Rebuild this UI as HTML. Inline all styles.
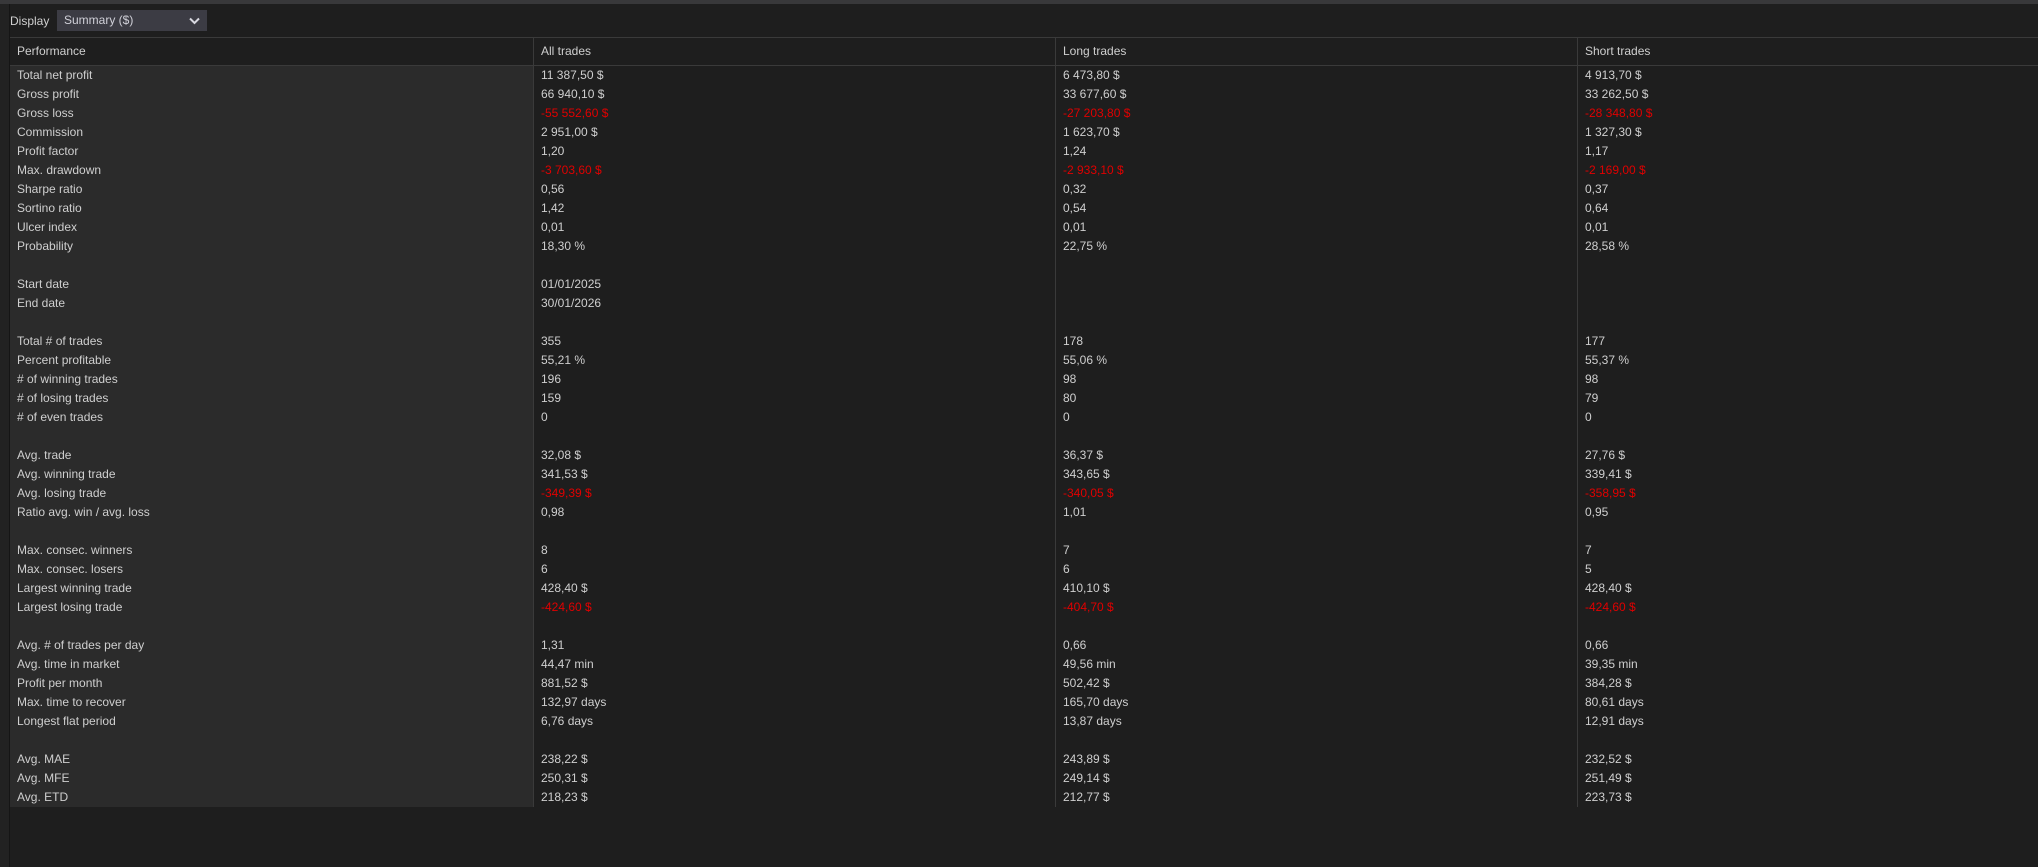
<!DOCTYPE html>
<html><head><meta charset="utf-8"><style>
*{margin:0;padding:0;box-sizing:border-box}
html,body{width:2038px;height:867px;background:#1e1e1e;overflow:hidden;font-family:"Liberation Sans",Arial,sans-serif;font-size:12px;color:#cfcfcf}
.top{position:absolute;left:0;top:0;width:2038px;height:4px;background:#38383a}
.lbar{position:absolute;left:0;top:4px;width:9px;height:863px;background:#222}
.lline{position:absolute;left:9px;top:4px;width:1px;height:863px;background:#151515}
.disp{position:absolute;left:10px;top:14px;line-height:14px;color:#d0d0d0}
.dd{position:absolute;left:57px;top:10px;width:150px;height:21px;background:#3c3c44;color:#d0d0d8;padding-left:7px;line-height:21px}
.dd svg{position:absolute;right:7px;top:7px}
.tbl{position:absolute;left:10px;top:37px;width:2028px}
.hdr{height:29px;border-top:1px solid #3a3a3a;border-bottom:1px solid #3a3a3a;position:relative}
.hdr div{position:absolute;top:0;line-height:27px;padding-left:7px;height:27px}
.row{height:19px;position:relative;line-height:19px;white-space:nowrap}
.row div{position:absolute;top:0;height:19px}
.c0{left:0;width:523px;background:#2b2b2b;padding-left:7px}
.c1{left:523px;width:522px;padding-left:7px;border-left:1px solid #3a3a3a}
.c2{left:1045px;width:522px;padding-left:7px;border-left:1px solid #3a3a3a}
.c3{left:1567px;width:461px;padding-left:7px;border-left:1px solid #3a3a3a}
.r{color:#e00000}
</style></head><body>
<div class="top"></div><div class="lbar"></div><div class="lline"></div>
<div class="disp">Display</div>
<div class="dd">Summary ($)<svg width="11" height="8" viewBox="0 0 11 8"><path d="M1 1.5 L5.5 6 L10 1.5" stroke="#d8d8e0" stroke-width="2" fill="none"/></svg></div>
<div class="tbl">
<div class="hdr"><div class="c0" style="background:#1e1e1e">Performance</div><div class="c1">All trades</div><div class="c2">Long trades</div><div class="c3">Short trades</div></div>
<div class="row"><div class="c0">Total net profit</div><div class="c1">11 387,50 $</div><div class="c2">6 473,80 $</div><div class="c3">4 913,70 $</div></div>
<div class="row"><div class="c0">Gross profit</div><div class="c1">66 940,10 $</div><div class="c2">33 677,60 $</div><div class="c3">33 262,50 $</div></div>
<div class="row"><div class="c0">Gross loss</div><div class="c1 r">-55 552,60 $</div><div class="c2 r">-27 203,80 $</div><div class="c3 r">-28 348,80 $</div></div>
<div class="row"><div class="c0">Commission</div><div class="c1">2 951,00 $</div><div class="c2">1 623,70 $</div><div class="c3">1 327,30 $</div></div>
<div class="row"><div class="c0">Profit factor</div><div class="c1">1,20</div><div class="c2">1,24</div><div class="c3">1,17</div></div>
<div class="row"><div class="c0">Max. drawdown</div><div class="c1 r">-3 703,60 $</div><div class="c2 r">-2 933,10 $</div><div class="c3 r">-2 169,00 $</div></div>
<div class="row"><div class="c0">Sharpe ratio</div><div class="c1">0,56</div><div class="c2">0,32</div><div class="c3">0,37</div></div>
<div class="row"><div class="c0">Sortino ratio</div><div class="c1">1,42</div><div class="c2">0,54</div><div class="c3">0,64</div></div>
<div class="row"><div class="c0">Ulcer index</div><div class="c1">0,01</div><div class="c2">0,01</div><div class="c3">0,01</div></div>
<div class="row"><div class="c0">Probability</div><div class="c1">18,30 %</div><div class="c2">22,75 %</div><div class="c3">28,58 %</div></div>
<div class="row"><div class="c0"></div><div class="c1"></div><div class="c2"></div><div class="c3"></div></div>
<div class="row"><div class="c0">Start date</div><div class="c1">01/01/2025</div><div class="c2"></div><div class="c3"></div></div>
<div class="row"><div class="c0">End date</div><div class="c1">30/01/2026</div><div class="c2"></div><div class="c3"></div></div>
<div class="row"><div class="c0"></div><div class="c1"></div><div class="c2"></div><div class="c3"></div></div>
<div class="row"><div class="c0">Total # of trades</div><div class="c1">355</div><div class="c2">178</div><div class="c3">177</div></div>
<div class="row"><div class="c0">Percent profitable</div><div class="c1">55,21 %</div><div class="c2">55,06 %</div><div class="c3">55,37 %</div></div>
<div class="row"><div class="c0"># of winning trades</div><div class="c1">196</div><div class="c2">98</div><div class="c3">98</div></div>
<div class="row"><div class="c0"># of losing trades</div><div class="c1">159</div><div class="c2">80</div><div class="c3">79</div></div>
<div class="row"><div class="c0"># of even trades</div><div class="c1">0</div><div class="c2">0</div><div class="c3">0</div></div>
<div class="row"><div class="c0"></div><div class="c1"></div><div class="c2"></div><div class="c3"></div></div>
<div class="row"><div class="c0">Avg. trade</div><div class="c1">32,08 $</div><div class="c2">36,37 $</div><div class="c3">27,76 $</div></div>
<div class="row"><div class="c0">Avg. winning trade</div><div class="c1">341,53 $</div><div class="c2">343,65 $</div><div class="c3">339,41 $</div></div>
<div class="row"><div class="c0">Avg. losing trade</div><div class="c1 r">-349,39 $</div><div class="c2 r">-340,05 $</div><div class="c3 r">-358,95 $</div></div>
<div class="row"><div class="c0">Ratio avg. win / avg. loss</div><div class="c1">0,98</div><div class="c2">1,01</div><div class="c3">0,95</div></div>
<div class="row"><div class="c0"></div><div class="c1"></div><div class="c2"></div><div class="c3"></div></div>
<div class="row"><div class="c0">Max. consec. winners</div><div class="c1">8</div><div class="c2">7</div><div class="c3">7</div></div>
<div class="row"><div class="c0">Max. consec. losers</div><div class="c1">6</div><div class="c2">6</div><div class="c3">5</div></div>
<div class="row"><div class="c0">Largest winning trade</div><div class="c1">428,40 $</div><div class="c2">410,10 $</div><div class="c3">428,40 $</div></div>
<div class="row"><div class="c0">Largest losing trade</div><div class="c1 r">-424,60 $</div><div class="c2 r">-404,70 $</div><div class="c3 r">-424,60 $</div></div>
<div class="row"><div class="c0"></div><div class="c1"></div><div class="c2"></div><div class="c3"></div></div>
<div class="row"><div class="c0">Avg. # of trades per day</div><div class="c1">1,31</div><div class="c2">0,66</div><div class="c3">0,66</div></div>
<div class="row"><div class="c0">Avg. time in market</div><div class="c1">44,47 min</div><div class="c2">49,56 min</div><div class="c3">39,35 min</div></div>
<div class="row"><div class="c0">Profit per month</div><div class="c1">881,52 $</div><div class="c2">502,42 $</div><div class="c3">384,28 $</div></div>
<div class="row"><div class="c0">Max. time to recover</div><div class="c1">132,97 days</div><div class="c2">165,70 days</div><div class="c3">80,61 days</div></div>
<div class="row"><div class="c0">Longest flat period</div><div class="c1">6,76 days</div><div class="c2">13,87 days</div><div class="c3">12,91 days</div></div>
<div class="row"><div class="c0"></div><div class="c1"></div><div class="c2"></div><div class="c3"></div></div>
<div class="row"><div class="c0">Avg. MAE</div><div class="c1">238,22 $</div><div class="c2">243,89 $</div><div class="c3">232,52 $</div></div>
<div class="row"><div class="c0">Avg. MFE</div><div class="c1">250,31 $</div><div class="c2">249,14 $</div><div class="c3">251,49 $</div></div>
<div class="row"><div class="c0">Avg. ETD</div><div class="c1">218,23 $</div><div class="c2">212,77 $</div><div class="c3">223,73 $</div></div>
</div>
</body></html>
